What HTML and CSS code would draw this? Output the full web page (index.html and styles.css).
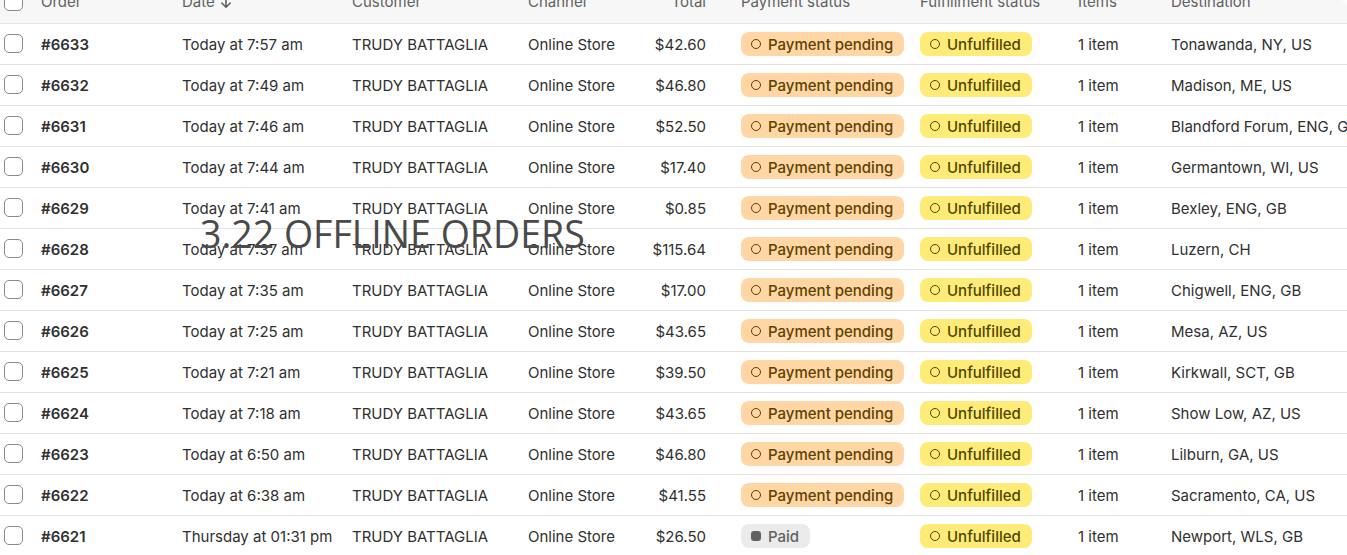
FILE: index.html
```html
<!DOCTYPE html>
<html lang="en">
<head>
<meta charset="utf-8">
<title>Orders</title>
<link rel="stylesheet" href="styles.css">
</head>
<body>
<div class="card">
  <div class="table">
    <div class="row head">
      <div class="cell"><span class="cb"></span></div>
      <div class="cell">Order</div>
      <div class="cell">Date<svg class="arrow" width="12" height="14" viewBox="0 0 12 14"><path d="M6 1.5v10.5M1.8 8l4.2 4.2L10.2 8" fill="none" stroke="#616161" stroke-width="1.6" stroke-linecap="round" stroke-linejoin="round"/></svg></div>
      <div class="cell">Customer</div>
      <div class="cell">Channel</div>
      <div class="cell num">Total</div>
      <div class="cell">Payment status</div>
      <div class="cell">Fulfillment status</div>
      <div class="cell">Items</div>
      <div class="cell">Destination</div>
    </div>

    <div class="row"><div class="cell"><span class="cb"></span></div><div class="cell id">#6633</div><div class="cell">Today at 7:57 am</div><div class="cell">TRUDY BATTAGLIA</div><div class="cell">Online Store</div><div class="cell num">$42.60</div><div class="cell"><span class="badge pending"><i class="ring"></i>Payment pending</span></div><div class="cell"><span class="badge unful"><i class="ring"></i>Unfulfilled</span></div><div class="cell">1 item</div><div class="cell">Tonawanda, NY, US</div></div>

    <div class="row"><div class="cell"><span class="cb"></span></div><div class="cell id">#6632</div><div class="cell">Today at 7:49 am</div><div class="cell">TRUDY BATTAGLIA</div><div class="cell">Online Store</div><div class="cell num">$46.80</div><div class="cell"><span class="badge pending"><i class="ring"></i>Payment pending</span></div><div class="cell"><span class="badge unful"><i class="ring"></i>Unfulfilled</span></div><div class="cell">1 item</div><div class="cell">Madison, ME, US</div></div>

    <div class="row"><div class="cell"><span class="cb"></span></div><div class="cell id">#6631</div><div class="cell">Today at 7:46 am</div><div class="cell">TRUDY BATTAGLIA</div><div class="cell">Online Store</div><div class="cell num">$52.50</div><div class="cell"><span class="badge pending"><i class="ring"></i>Payment pending</span></div><div class="cell"><span class="badge unful"><i class="ring"></i>Unfulfilled</span></div><div class="cell">1 item</div><div class="cell">Blandford Forum, ENG, GB</div></div>

    <div class="row"><div class="cell"><span class="cb"></span></div><div class="cell id">#6630</div><div class="cell">Today at 7:44 am</div><div class="cell">TRUDY BATTAGLIA</div><div class="cell">Online Store</div><div class="cell num">$17.40</div><div class="cell"><span class="badge pending"><i class="ring"></i>Payment pending</span></div><div class="cell"><span class="badge unful"><i class="ring"></i>Unfulfilled</span></div><div class="cell">1 item</div><div class="cell">Germantown, WI, US</div></div>

    <div class="row"><div class="cell"><span class="cb"></span></div><div class="cell id">#6629</div><div class="cell">Today at 7:41 am</div><div class="cell">TRUDY BATTAGLIA</div><div class="cell">Online Store</div><div class="cell num">$0.85</div><div class="cell"><span class="badge pending"><i class="ring"></i>Payment pending</span></div><div class="cell"><span class="badge unful"><i class="ring"></i>Unfulfilled</span></div><div class="cell">1 item</div><div class="cell">Bexley, ENG, GB</div></div>

    <div class="row"><div class="cell"><span class="cb"></span></div><div class="cell id">#6628</div><div class="cell">Today at 7:37 am</div><div class="cell">TRUDY BATTAGLIA</div><div class="cell">Online Store</div><div class="cell num">$115.64</div><div class="cell"><span class="badge pending"><i class="ring"></i>Payment pending</span></div><div class="cell"><span class="badge unful"><i class="ring"></i>Unfulfilled</span></div><div class="cell">1 item</div><div class="cell">Luzern, CH</div></div>

    <div class="row"><div class="cell"><span class="cb"></span></div><div class="cell id">#6627</div><div class="cell">Today at 7:35 am</div><div class="cell">TRUDY BATTAGLIA</div><div class="cell">Online Store</div><div class="cell num">$17.00</div><div class="cell"><span class="badge pending"><i class="ring"></i>Payment pending</span></div><div class="cell"><span class="badge unful"><i class="ring"></i>Unfulfilled</span></div><div class="cell">1 item</div><div class="cell">Chigwell, ENG, GB</div></div>

    <div class="row"><div class="cell"><span class="cb"></span></div><div class="cell id">#6626</div><div class="cell">Today at 7:25 am</div><div class="cell">TRUDY BATTAGLIA</div><div class="cell">Online Store</div><div class="cell num">$43.65</div><div class="cell"><span class="badge pending"><i class="ring"></i>Payment pending</span></div><div class="cell"><span class="badge unful"><i class="ring"></i>Unfulfilled</span></div><div class="cell">1 item</div><div class="cell">Mesa, AZ, US</div></div>

    <div class="row"><div class="cell"><span class="cb"></span></div><div class="cell id">#6625</div><div class="cell">Today at 7:21 am</div><div class="cell">TRUDY BATTAGLIA</div><div class="cell">Online Store</div><div class="cell num">$39.50</div><div class="cell"><span class="badge pending"><i class="ring"></i>Payment pending</span></div><div class="cell"><span class="badge unful"><i class="ring"></i>Unfulfilled</span></div><div class="cell">1 item</div><div class="cell">Kirkwall, SCT, GB</div></div>

    <div class="row"><div class="cell"><span class="cb"></span></div><div class="cell id">#6624</div><div class="cell">Today at 7:18 am</div><div class="cell">TRUDY BATTAGLIA</div><div class="cell">Online Store</div><div class="cell num">$43.65</div><div class="cell"><span class="badge pending"><i class="ring"></i>Payment pending</span></div><div class="cell"><span class="badge unful"><i class="ring"></i>Unfulfilled</span></div><div class="cell">1 item</div><div class="cell">Show Low, AZ, US</div></div>

    <div class="row"><div class="cell"><span class="cb"></span></div><div class="cell id">#6623</div><div class="cell">Today at 6:50 am</div><div class="cell">TRUDY BATTAGLIA</div><div class="cell">Online Store</div><div class="cell num">$46.80</div><div class="cell"><span class="badge pending"><i class="ring"></i>Payment pending</span></div><div class="cell"><span class="badge unful"><i class="ring"></i>Unfulfilled</span></div><div class="cell">1 item</div><div class="cell">Lilburn, GA, US</div></div>

    <div class="row"><div class="cell"><span class="cb"></span></div><div class="cell id">#6622</div><div class="cell">Today at 6:38 am</div><div class="cell">TRUDY BATTAGLIA</div><div class="cell">Online Store</div><div class="cell num">$41.55</div><div class="cell"><span class="badge pending"><i class="ring"></i>Payment pending</span></div><div class="cell"><span class="badge unful"><i class="ring"></i>Unfulfilled</span></div><div class="cell">1 item</div><div class="cell">Sacramento, CA, US</div></div>

    <div class="row"><div class="cell"><span class="cb"></span></div><div class="cell id">#6621</div><div class="cell">Thursday at 01:31 pm</div><div class="cell">TRUDY BATTAGLIA</div><div class="cell">Online Store</div><div class="cell num">$26.50</div><div class="cell"><span class="badge paid"><i class="dot"></i>Paid</span></div><div class="cell"><span class="badge unful"><i class="ring"></i>Unfulfilled</span></div><div class="cell">1 item</div><div class="cell">Newport, WLS, GB</div></div>
  </div>
  <div class="watermark">3.22 OFFLINE ORDERS</div>
</div>
</body>
</html>
```

FILE: styles.css
```css
html, body {
  margin: 0;
  padding: 0;
  background: #ffffff;
}
body {
  font-family: Inter, "Noto Sans", sans-serif;
  font-size: 15px;
  font-weight: 400;
  color: #303030;
  overflow: hidden;
}
.card {
  position: relative;
  width: 1347px;
  height: 580px;
  margin-top: -2px;
  border-top-right-radius: 12px;
  overflow: hidden;
  background: #ffffff;
}
.table {
  margin-top: -15px;
}
.row {
  display: grid;
  grid-template-columns: 41px 141px 170px 176px 112px 101px 179px 158px 93px 1fr;
  height: 40px;
  border-bottom: 1px solid #e3e3e3;
  align-items: center;
  white-space: nowrap;
}
.row.head {
  background: #f7f7f7;
  color: #616161;
  align-items: start;
}
.row.head .cell {
  height: 40px;
  display: flex;
  align-items: center;
  margin-top: -2px;
}
.row.head .cell.num {
  justify-content: flex-end;
}
.cell:first-child {
  padding-left: 4px;
  display: flex;
  align-items: center;
}
.cell.id {
  font-weight: 600;
}
.cell.num {
  text-align: right;
  padding-right: 35px;
}
.arrow {
  margin-left: 5px;
  margin-top: 2px;
}
.cb {
  display: block;
  width: 17px;
  height: 17px;
  border: 1px solid #8a8a8a;
  border-radius: 5px;
  background: #fff;
}
.row:not(.head) .cell:first-child {
  margin-top: -1px;
}
.badge {
  display: inline-flex;
  align-items: center;
  height: 24px;
  padding: 0 11px 0 10px;
  border-radius: 8px;
  font-weight: 500;
  box-sizing: border-box;
}
.badge i {
  display: inline-block;
  width: 10px;
  height: 10px;
  box-sizing: border-box;
  border-radius: 50%;
  margin-right: 7px;
}
.badge .ring {
  border: 1.7px solid currentColor;
}
.badge .dot {
  background: #616161;
  border-radius: 3px;
}
.pending {
  background: #ffd6a4;
  color: #5e4200;
}
.unful {
  background: #ffeb78;
  color: #4f4700;
}
.paid {
  background: #ebebeb;
  color: #616161;
}
.watermark {
  position: absolute;
  left: 200px;
  top: 212px;
  font-family: "Open Sans", "Noto Sans", sans-serif;
  font-size: 37.5px;
  color: #4a4a4a;
  white-space: nowrap;
  pointer-events: none;
  line-height: 1.3;
}
```
